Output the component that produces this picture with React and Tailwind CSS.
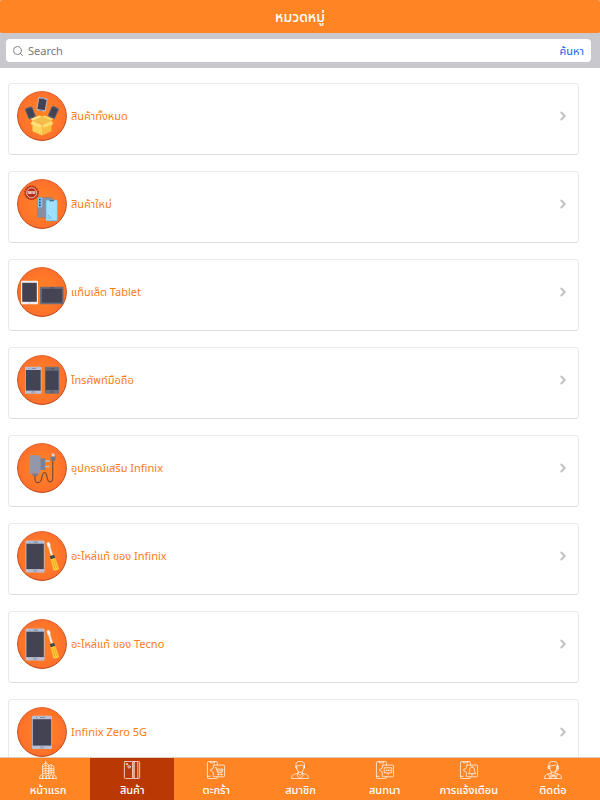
import React from 'react'
import { ChevronRight, Search } from 'lucide-react'

function Badge({ children }) {
  return (
    <svg viewBox="0 0 50 50" className="h-[50px] w-[50px] shrink-0" aria-hidden="true">
      <defs>
        <radialGradient id="disc">
          <stop offset="0" stopColor="#ff8420" />
          <stop offset="0.6" stopColor="#ff7a28" />
          <stop offset="1" stopColor="#fd6f2c" />
        </radialGradient>
        <linearGradient id="rim" x1="0" y1="0" x2="0" y2="1">
          <stop offset="0" stopColor="#e0602a" />
          <stop offset="1" stopColor="#b8420e" />
        </linearGradient>
      </defs>
      <circle cx="25" cy="25" r="24.4" fill="url(#disc)" stroke="url(#rim)" strokeWidth="1" />
      {children}
    </svg>
  )
}

function Phone({ x, y, w, h, bar = 3, dark = false, transform }) {
  const line = dark ? '#454554' : '#6f7284'
  return (
    <g transform={transform}>
      <rect x={x} y={y} width={w} height={h} rx="1" fill={dark ? '#70707d' : '#b9c0d6'} />
      <rect x={x + 0.8} y={y + bar} width={w - 1.6} height={h - bar * 2} fill="#444354" />
      <path d={`M${x + w * 0.2} ${y + bar / 2}h1M${x + w * 0.4} ${y + bar / 2}h${w * 0.25}`} stroke={line} strokeWidth="0.8" />
      <rect x={x + w / 2 - 1.7} y={y + h - bar * 0.7} width="3.4" height={bar * 0.4} rx="0.5" fill="none" stroke={line} strokeWidth="0.4" />
    </g>
  )
}

function AllProducts() {
  return (
    <Badge>
      <Phone x={9.4} y={16} w={8} h={11.8} bar={1.3} dark transform="rotate(-22 13.4 21.9)" />
      <Phone x={20.4} y={6.6} w={9.2} h={13.4} bar={1.3} transform="rotate(10 25 13.3)" />
      <Phone x={32.4} y={15.5} w={8} h={11.8} bar={1.3} dark transform="rotate(24 36.4 21.4)" />
      <path d="M15.5 31 25 35v9.5l-9.5-4.3z" fill="#ffd45c" />
      <path d="M34.5 31 25 35v9.5l9.5-4.3z" fill="#f9bd43" />
      <path d="M15.5 29.800 25 25.600l9.500 4.200-9.500 4.400z" fill="#f3bd4a" />
      <path d="M15.500 29.800 13.600 33l9.200 3.700 2.200-2.500z" fill="#ffe07a" />
      <path d="M34.500 29.800l1.900 3.200-9.200 3.700-2.200-2.500z" fill="#ffdb70" />
      <path d="m15.500 29.800-1.600-2 8.500-3.400 2.600 1.400z" fill="#ffe58c" />
      <path d="m34.500 29.800 1.600-2-8.500-3.400-2.600 1.400z" fill="#ffd966" />
    </Badge>
  )
}

function NewProducts() {
  return (
    <Badge>
      <circle cx="14.6" cy="13.8" r="6.6" fill="#c43c1c" stroke="#a02c10" strokeWidth="1.3" strokeDasharray="1.6 1" />
      <circle cx="14.6" cy="13.8" r="5" fill="#b92c14" stroke="#f7e3dc" strokeWidth="0.8" />
      <text x="14.6" y="15" textAnchor="middle" fontSize="3.4" fontWeight="700" fill="#fff" fontFamily="Liberation Sans, sans-serif">NEW</text>
      <rect x="20.2" y="18.2" width="15.4" height="20.6" rx="1" fill="#8b8d9f" stroke="#b66a4c" strokeWidth="0.4" />
      <rect x="20.7" y="18.4" width="4.6" height="10" rx="0.8" fill="#7cc5ec" />
      <circle cx="22.9" cy="20.6" r="0.9" fill="#28466e" />
      <circle cx="22.9" cy="23.4" r="0.9" fill="#28466e" />
      <circle cx="22.9" cy="26.2" r="0.9" fill="#28466e" />
      <rect x="29" y="21" width="11.4" height="20.8" rx="1" fill="#9ee0ff" stroke="#58b2e2" strokeWidth="0.6" />
      <path d="M32.5 21h4.4v1.3h-4.4z" fill="#3f6f93" />
      <path d="m30.5 35.5 4 4M30.5 38l2 2" stroke="#4fa6e0" strokeWidth="0.8" />
    </Badge>
  )
}

function Tablets() {
  return (
    <Badge>
      <rect x="4" y="13.8" width="17" height="23.4" rx="1" fill="#eceef6" />
      <rect x="5.2" y="15.8" width="14.6" height="19" fill="#424152" />
      <circle cx="12.5" cy="36" r="0.6" fill="#b3b4c4" />
      <rect x="23" y="19.8" width="23.6" height="17.4" rx="1" fill="#6c6c78" />
      <rect x="24.8" y="21.8" width="20.4" height="13.8" fill="#454455" />
      <path d="M33.6 20.8h2.6" stroke="#3c3b49" strokeWidth="0.7" />
    </Badge>
  )
}

function Phones() {
  return (
    <Badge>
      <Phone x={8} y={11.8} w={16.5} h={27} bar={3.2} />
      <Phone x={27.8} y={11.8} w={14.4} h={27} bar={3.8} dark />
    </Badge>
  )
}

function Charger() {
  return (
    <Badge>
      <path d="M28 18.2h4.4M28 23.5h4.4" stroke="#b9bccb" strokeWidth="1.7" />
      <rect x="22.3" y="15.6" width="6" height="11.4" rx="1" fill="#7d8094" />
      <rect x="12" y="12.2" width="11.6" height="18.6" rx="1.4" fill="#9496aa" />
      <path d="M15.2 30.4H21l-.8 2.8H16z" fill="#77798c" />
      <path d="M18 33v3.5c0 4.2 5.600 4 6.400 0 .9-3.800 1-7 3.200-7s2.200 3.800 2.800 6.200c.9 4.600 5.300 4.200 5.300-.7V18" fill="none" stroke="#70483b" strokeWidth="1.1" />
      <rect x="34.7" y="10.6" width="2.8" height="3.2" fill="#d6d8e2" />
      <path d="M33.7 13.4h4.800v3.400l-1.400 1.600h-2l-1.400-1.600z" fill="#747688" />
    </Badge>
  )
}

function SpareParts() {
  return (
    <Badge>
      <Phone x={8.6} y={9.4} w={19} h={32} bar={3.3} />
      <g transform="rotate(-17 31 12)">
        <path d="M29.8 11.5h2.6l.4 3.500-.7 1v10h-2v-10l-.7-1z" fill="#f1f3f8" />
        <rect x="28.9" y="25" width="4.6" height="3.4" rx="0.8" fill="#3b4a52" />
        <path d="M28.8 28.4h4.8l.6 10.600c0 2-6 2-6 0z" fill="#ffc83a" />
        <path d="M30.300 30v8.600M32.300 30v8.600" stroke="#e89a1e" strokeWidth="0.6" />
      </g>
    </Badge>
  )
}

function SinglePhone() {
  return (
    <Badge>
      <Phone x={15} y={8.7} w={20} h={33.4} bar={3.5} />
    </Badge>
  )
}

function NavIcon({ children }) {
  return (
    <svg
      viewBox="0 0 20 20"
      className="h-5 w-5"
      fill="none"
      stroke="currentColor"
      strokeWidth="0.8"
      strokeLinecap="round"
      strokeLinejoin="round"
      aria-hidden="true"
    >
      {children}
    </svg>
  )
}

function HomeIcon() {
  return (
    <NavIcon>
      <path d="M4 15.500V4.500L7.500 2V.5M7.500 2l3.500 2.500v11M4 6.500l3.500-1.500 3.500 1.500M4 9l3.500-1 3.500 1M4 11.500l3.500-.8 3.500.8M4 14l3.500-.5 3.500.5M7.500 2v13" />
      <path d="M11 5.500 13 4l3.500 2v9.500M11 8l5.500 1M11 10.500l5.500.5M11 13h5.500M13.500 4.500V15" />
      <path d="M.5 19.500h19M1 19.500V17c0-2 3-2 3 0v2.500M4 18c0-2.500 3.500-2.500 3.500 0v1.500M12 19.500V17c0-2 3.500-2 3.500 0v2.500M15.500 18c0-2.500 3.500-2.500 3.500 0v1.500M8.500 19v-3H11v3" />
    </NavIcon>
  )
}

function ProductIcon() {
  return (
    <NavIcon>
      <rect x="1.5" y="0.5" width="9.5" height="19" rx="1" />
      <rect x="11" y="0.5" width="7.5" height="19" rx="1" />
      <path d="M12.5 1v18M16.500 1v18" />
      <circle cx="4.200" cy="3.500" r="0.900" />
      <circle cx="6.800" cy="6.500" r="1.400" />
    </NavIcon>
  )
}

function PhoneBubble({ children }) {
  return (
    <NavIcon>
      <path d="M11.500 4.500V2c0-1-.5-1.500-1.500-1.500H2C1 .5.500 1 .5 2v16c0 1 .5 1.500 1.500 1.500h8c1 0 1.500-.5 1.500-1.500v-.5M3.500.5v1.500h5V.5M.5 17h3" />
      <path d="M8 4.500h10.500c.7 0 1 .3 1 1v11c0 .7-.3 1-1 1H8c-.7 0-1-.3-1-1v-4L3.500 10 7 8V5.500c0-.7.3-1 1-1z" />
      {children}
    </NavIcon>
  )
}

function CartIcon() {
  return (
    <PhoneBubble>
      <path d="M9 7.500h1.500l1.300 5.500h4.700l1.300-4H11M11.300 11h5.800" />
      <circle cx="12.5" cy="15" r="0.7" />
      <circle cx="16" cy="15" r="0.7" />
    </PhoneBubble>
  )
}

function ChatIcon() {
  return (
    <PhoneBubble>
      <path d="M9.500 7.500h8V13H15l-1.500 2v-2h-4z" />
      <path d="M11.200 10.300h.6M13.300 10.300h.6M15.400 10.300h.6" strokeWidth="1.2" />
    </PhoneBubble>
  )
}

function BellIcon() {
  return (
    <PhoneBubble>
      <path d="M9.500 13.800c1.300-1 1.300-2 1.300-3.800 0-2 .9-3.300 2.600-3.300S16 8 16 10c0 1.800 0 2.800 1.300 3.800zM13.400 6v.7M12.600 15.300h1.600" />
    </PhoneBubble>
  )
}

function Person({ children }) {
  return (
    <NavIcon>
      <path d="M5.500 7V3.500C5.500 1.500 7.500.5 10 .5c3 0 5 1 5 3.500V7" />
      <path d="M6.500 5.500c3 0 5-.5 6-1.500.3 1 1 1.500 1.700 1.500V8c0 2.500-2 4.500-4 4.500S6.500 10.500 6.500 8zM5.500 6v2l1 .5M15 6v2l-1 .5" />
      <path d="M8 12v2l2.200 2 2.300-2v-2M8 13.500 3 15c-1.500.5-2.300 1.500-2.300 4.500h18.600c0-3-.8-4-2.300-4.500l-4.500-1.500" />
      {children}
    </NavIcon>
  )
}

function MemberIcon() {
  return (
    <Person>
      <path d="m7.500 14-.5 2 3.200 3.500L13.500 16l-1-2" />
    </Person>
  )
}

function ContactIcon() {
  return (
    <Person>
      <path d="M4.500 5.500v3h1M16 5.500v3h-1M15.500 8.500V10c0 1-1.500 1.500-3 1.500M5 14.500l2 5M15 14.500l-2 5M8 15.500l2.200 1.200 2.300-1.200V18l-2.300-1.200L8 18z" />
    </Person>
  )
}

const categories = [
  { name: 'สินค้าทั้งหมด', icon: AllProducts },
  { name: 'สินค้าใหม่', icon: NewProducts },
  { name: 'แท็บเล็ต Tablet', icon: Tablets },
  { name: 'โทรศัพท์มือถือ', icon: Phones },
  { name: 'อุปกรณ์เสริม Infinix', icon: Charger },
  { name: 'อะไหล่แท้ ของ Infinix', icon: SpareParts },
  { name: 'อะไหล่แท้ ของ Tecno', icon: SpareParts },
  { name: 'Infinix Zero 5G', icon: SinglePhone },
]

const tabs = [
  { label: 'หน้าแรก', icon: HomeIcon },
  { label: 'สินค้า', icon: ProductIcon, active: true },
  { label: 'ตะกร้า', icon: CartIcon },
  { label: 'สมาชิก', icon: MemberIcon },
  { label: 'สนทนา', icon: ChatIcon },
  { label: 'การแจ้งเตือน', icon: BellIcon },
  { label: 'ติดต่อ', icon: ContactIcon },
]

export default function App() {
  return (
    <div className="flex h-screen flex-col bg-white font-['Noto_Sans','Noto_Sans_Thai',sans-serif]">
      <div className="bg-[#c9c8ce]">
        <header className="flex h-[33px] items-center justify-center rounded-[2px] bg-[#ff8524]">
          <h1 className="text-[14px] leading-5 font-medium text-white">หมวดหมู่</h1>
        </header>
        <form className="py-[6px] pr-[9px] pl-[6px]" onSubmit={(e) => e.preventDefault()}>
          <div className="flex h-[23px] items-center rounded-[4px] bg-white pr-[7px] pl-[6px]">
            <Search className="h-3 w-3 shrink-0 text-[#77777c]" strokeWidth={1.8} aria-hidden="true" />
            <input
              type="text"
              placeholder="Search"
              aria-label="Search"
              className="ml-1 h-full min-w-0 flex-1 text-[11px] text-gray-700 outline-none placeholder:text-[#77777c]"
            />
            <button type="submit" className="text-[11px] leading-4 text-[#1a62f0]">ค้นหา</button>
          </div>
        </form>
      </div>

      <main className="min-h-0 flex-1 overflow-y-auto [scrollbar-width:none]">
        <ul className="flex flex-col gap-4 pt-[15px] pr-[21px] pb-4 pl-2">
          {categories.map(({ name, icon: Icon }) => (
            <li key={name}>
              <a
                href="#"
                className="block h-[72px] rounded-[4px] border border-[#e9e9e9] border-b-[#dcdcdc] px-2 pt-[7px]"
              >
                <span className="flex h-[50px] items-center">
                  <Icon />
                  <span className="ml-1 flex-1 text-[11px] leading-4 text-[#ff7b14]">{name}</span>
                  <ChevronRight className="h-[14px] w-[14px] text-[#c2c2c6]" strokeWidth={3.5} aria-hidden="true" />
                </span>
              </a>
            </li>
          ))}
        </ul>
      </main>

      <nav className="flex h-[43px] shrink-0 border-t border-[#e3c9b4] bg-[#ff8524] pr-[5px] pl-[6px]">
        {tabs.map(({ label, icon: Icon, active }) => (
          <button
            key={label}
            type="button"
            aria-current={active ? 'page' : undefined}
            className={`flex min-w-0 flex-1 flex-col items-center gap-px pt-[3px] text-white ${active ? 'bg-[#b93803]' : ''}`}
          >
            <Icon />
            <span className="text-[11px] leading-5 font-medium whitespace-nowrap">{label}</span>
          </button>
        ))}
      </nav>
    </div>
  )
}
